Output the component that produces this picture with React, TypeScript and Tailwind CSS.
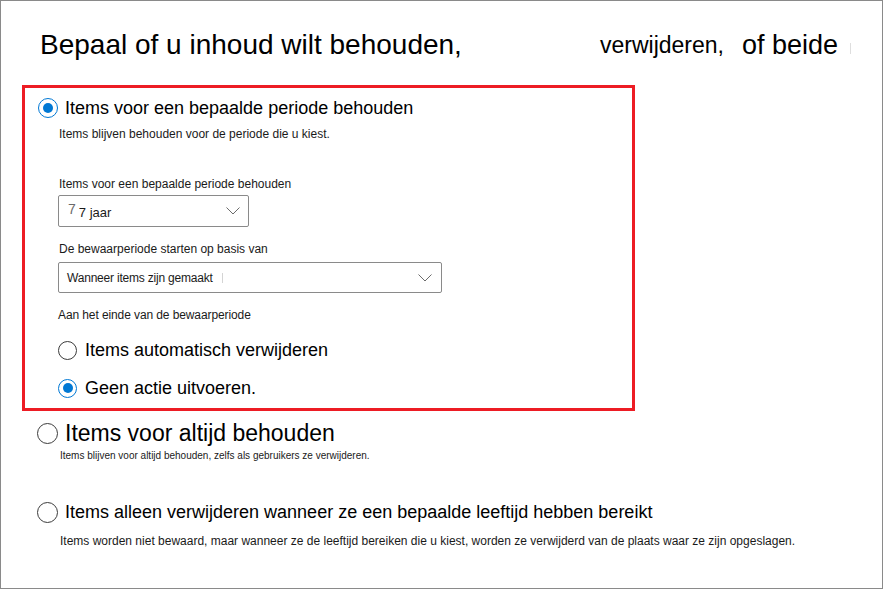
import { useState } from "react";

const Radio = ({ checked, size = "w-[20px] h-[20px]" }: { checked: boolean; size?: string }) => (
  <span
    className={`${size} shrink-0 rounded-full flex items-center justify-center bg-white ${
      checked ? "border-[1.5px] border-[#0078d4]" : "border-[1.5px] border-[#3b3b3b]"
    }`}>
    {checked && <span className="w-[10px] h-[10px] rounded-full bg-[#0078d4]" />}
  </span>
);

const Chevron = () => (
  <svg width="14" height="8" viewBox="0 0 14 8" fill="none" className="shrink-0">
    <path d="M0.5 0.5 L7 7 L13.5 0.5" stroke="#6b6b6b" strokeWidth="1" />
  </svg>
);

export default function App() {
  const [mode, setMode] = useState("periode");
  const [einde, setEinde] = useState("geen");

  return (
    <div className="w-[883px] h-[589px] border border-[#8a8a8a] bg-white overflow-hidden text-black font-['Liberation_Sans',Arial,sans-serif]">
      {/* title */}
      <div className="flex items-start pt-[27px] pl-[39px]">
        <span className="w-[560px] text-[28px] leading-[34px] whitespace-nowrap">Bepaal of u inhoud wilt behouden,</span>
        <span className="w-[142px] mt-[3px] text-[23px] leading-[28px] whitespace-nowrap">verwijderen,</span>
        <span className="text-[27px] leading-[34px] whitespace-nowrap">of beide</span>
        <span className="ml-[12px] mt-[15px] w-px h-[11px] bg-[#dedede]" />
      </div>

      <div className="pl-[21px] mt-[23px]">
        {/* boxed option */}
        <div className="w-[613px] h-[326px] border-[3px] border-[#ed1c24] pt-[8px] pl-[13px]">
          <button className="flex items-center gap-[7px]" onClick={() => setMode("periode")}>
            <Radio checked={mode === "periode"} />
            <span className="text-[18px] leading-[24px]">Items voor een bepaalde periode behouden</span>
          </button>
          <div className="pl-[21px]">
            <p className="mt-[6px] text-[12px] leading-[16px] text-[#1a1a1a]">
              Items blijven behouden voor de periode die u kiest.
            </p>
            <p className="mt-[34px] text-[12px] leading-[16px] text-[#1a1a1a]">
              Items voor een bepaalde periode behouden
            </p>
            <div className="mt-[3px] -ml-px w-[191px] h-[32px] border border-[#8a8a8a] rounded-[2px] flex items-center pl-[9px] pr-[8px]">
              <span className="text-[14px] text-[#6a6a6a] -mt-[3px]">7</span>
              <span className="ml-[3px] text-[13px] text-[#1a1a1a] mt-[3px]">7 jaar</span>
              <span className="flex-1" />
              <Chevron />
            </div>
            <p className="mt-[14px] text-[12px] leading-[16px] text-[#1a1a1a]">
              De bewaarperiode starten op basis van
            </p>
            <div className="mt-[5px] -ml-px w-[384px] h-[31px] border border-[#8a8a8a] rounded-[2px] flex items-center pl-[8px] pr-[9px]">
              <span className="text-[12px] tracking-[-0.2px] text-[#1a1a1a] mt-px">Wanneer items zijn gemaakt</span>
              <span className="ml-[9px] w-px h-[10px] bg-[#d4d4d4]" />
              <span className="flex-1" />
              <Chevron />
            </div>
            <p className="mt-[14px] -ml-px text-[12px] leading-[16px] tracking-[-0.1px] text-[#1a1a1a]">
              Aan het einde van de bewaarperiode
            </p>
            <button className="mt-[15px] -ml-px flex items-center gap-[8px]" onClick={() => setEinde("verwijderen")}>
              <Radio checked={einde === "verwijderen"} size="w-[19px] h-[19px]" />
              <span className="text-[18px] leading-[24px]">Items automatisch verwijderen</span>
            </button>
            <button className="mt-[14px] -ml-px flex items-center gap-[8px]" onClick={() => setEinde("geen")}>
              <Radio checked={einde === "geen"} size="w-[19px] h-[19px]" />
              <span className="text-[18px] leading-[24px]">Geen actie uitvoeren.</span>
            </button>
          </div>
        </div>

        {/* other options */}
        <div className="pl-[15px]">
          <button className="mt-[8px] flex items-center gap-[7px]" onClick={() => setMode("altijd")}>
            <Radio checked={mode === "altijd"} size="w-[21px] h-[21px]" />
            <span className="text-[23px] leading-[28px]">Items voor altijd behouden</span>
          </button>
          <p className="mt-[2px] pl-[23px] text-[10px] leading-[14px] text-[#1a1a1a]">
            Items blijven voor altijd behouden, zelfs als gebruikers ze verwijderen.
          </p>
          <button className="mt-[37px] flex items-center gap-[7px]" onClick={() => setMode("leeftijd")}>
            <Radio checked={mode === "leeftijd"} size="w-[21px] h-[21px]" />
            <span className="text-[18px] leading-[24px]">Items alleen verwijderen wanneer ze een bepaalde leeftijd hebben bereikt</span>
          </button>
          <p className="mt-[9px] pl-[23px] text-[12px] leading-[16px] text-[#1a1a1a]">
            Items worden niet bewaard, maar wanneer ze de leeftijd bereiken die u kiest, worden ze verwijderd van de plaats waar ze zijn opgeslagen.
          </p>
        </div>
      </div>
    </div>
  );
}
